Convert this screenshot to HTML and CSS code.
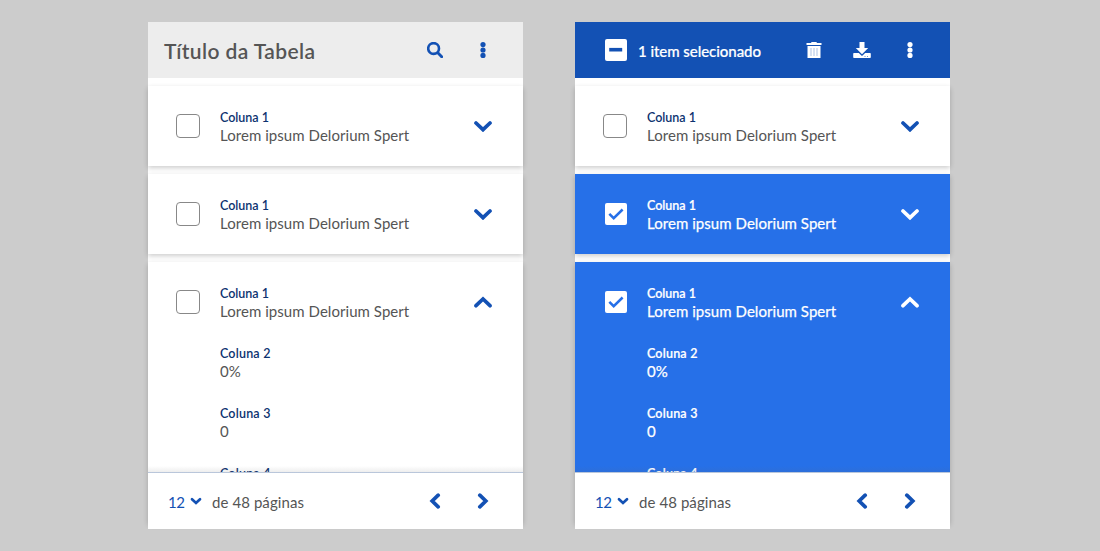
FILE: index.html
```html
<!DOCTYPE html>
<html lang="pt-BR">
<head>
<meta charset="utf-8">
<title>Tabela</title>
<link rel="stylesheet" href="styles.css">
</head>
<body>
<svg class="defs" width="0" height="0">
  <symbol id="down" viewBox="0 0 18 12"><path d="M2 3 9 9.700 16 3" fill="none" stroke="currentColor" stroke-width="3.700" stroke-linecap="round"/></symbol>
  <symbol id="up" viewBox="0 0 18 12"><path d="M2 9.700 9 3 16 9.700" fill="none" stroke="currentColor" stroke-width="3.700" stroke-linecap="round"/></symbol>
  <symbol id="caret" viewBox="0 0 12 8"><path d="M2 2.200 6 5.900 10 2.200" fill="none" stroke="currentColor" stroke-width="2.700" stroke-linecap="round"/></symbol>
  <symbol id="left" viewBox="0 0 16 16"><path d="M11.200 2.200 5.200 8l6 5.800" fill="none" stroke="currentColor" stroke-width="3.700" stroke-linecap="round"/></symbol>
  <symbol id="right" viewBox="0 0 16 16"><path d="M4.800 2.200 10.800 8l-6 5.800" fill="none" stroke="currentColor" stroke-width="3.700" stroke-linecap="round"/></symbol>
  <symbol id="more" viewBox="0 0 16 16"><g fill="currentColor"><circle cx="8" cy="2.600" r="2.600"/><circle cx="8" cy="8" r="2.600"/><circle cx="8" cy="13.400" r="2.600"/></g></symbol>
  <symbol id="search" viewBox="0 0 16 16"><path d="m10.800 10.800 3.900 3.900" stroke="currentColor" stroke-width="2.900" stroke-linecap="round"/><circle cx="6.600" cy="6.500" r="5.400" fill="none" stroke="currentColor" stroke-width="2.600"/></symbol>
  <symbol id="trash" viewBox="0 0 16 16"><path d="M.5 1H5l.6-1h4.800l.6 1h4.500v2H.5zM1.500 4h13v12h-13z" fill="currentColor"/><path d="M5 6v8M8 6v8M11 6v8" stroke="#1351b4" stroke-opacity=".35"/></symbol>
  <symbol id="download" viewBox="0 0 18 16"><path d="M6.500 0h5v6h3.700L9 12.200 2.800 6h3.700z" fill="currentColor"/><path d="M1 11h4.800L9 14l3.200-3H17q.8 0 .8.800v3.400q0 .8-.8.800H1q-.8 0-.8-.8v-3.400Q.2 11 1 11z" fill="currentColor"/><path d="M11.500 14.500h1M14 14.500h1" stroke="#1351b4" stroke-opacity=".6"/></symbol>
  <symbol id="check" viewBox="0 0 24 24"><rect x="1" y="1" width="22" height="22" rx="2" fill="#fff"/><path d="m5.300 11.800 4.400 4.400 8.900-8.700" fill="none" stroke="#2670e8" stroke-width="2.500"/></symbol>
  <symbol id="minus" viewBox="0 0 24 24"><rect x="1" y="1" width="22" height="22" rx="2" fill="#fff"/><path d="M5.200 11.700h13" stroke="#1351b4" stroke-width="3.600"/></symbol>
</svg>
<main class="stage">
  <section class="panel">
    <header class="bar">
      <h1 class="title">Título da Tabela</h1>
      <div class="actions"><svg class="icon"><use href="#search"/></svg><svg class="icon"><use href="#more"/></svg></div>
    </header>
    <article class="card">
      <span class="box"></span>
      <div class="cells"><div class="cell"><span class="label">Coluna 1</span><span class="value">Lorem ipsum Delorium Spert</span></div></div>
      <svg class="chevron"><use href="#down"/></svg>
    </article>
    <article class="card">
      <span class="box"></span>
      <div class="cells"><div class="cell"><span class="label">Coluna 1</span><span class="value">Lorem ipsum Delorium Spert</span></div></div>
      <svg class="chevron"><use href="#down"/></svg>
    </article>
    <article class="card open">
      <span class="box"></span>
      <div class="cells">
        <div class="cell"><span class="label">Coluna 1</span><span class="value">Lorem ipsum Delorium Spert</span></div>
        <div class="cell"><span class="label later">Coluna 2</span><span class="value">0%</span></div>
        <div class="cell"><span class="label later">Coluna 3</span><span class="value">0</span></div>
        <div class="cell"><span class="label later">Coluna 4</span></div>
      </div>
      <svg class="chevron"><use href="#up"/></svg>
    </article>
    <footer class="footer">
      <span class="page">12</span><svg class="caret"><use href="#caret"/></svg><span class="total">de 48 páginas</span>
      <div class="actions"><svg class="icon"><use href="#left"/></svg><svg class="icon"><use href="#right"/></svg></div>
    </footer>
  </section>
  <section class="panel">
    <header class="bar selected">
      <svg class="tick"><use href="#minus"/></svg>
      <span class="count">1 item selecionado</span>
      <div class="actions"><svg class="icon"><use href="#trash"/></svg><svg class="icon wide"><use href="#download"/></svg><svg class="icon"><use href="#more"/></svg></div>
    </header>
    <article class="card">
      <span class="box"></span>
      <div class="cells"><div class="cell"><span class="label">Coluna 1</span><span class="value">Lorem ipsum Delorium Spert</span></div></div>
      <svg class="chevron"><use href="#down"/></svg>
    </article>
    <article class="card active">
      <svg class="tick"><use href="#check"/></svg>
      <div class="cells"><div class="cell"><span class="label">Coluna 1</span><span class="value">Lorem ipsum Delorium Spert</span></div></div>
      <svg class="chevron"><use href="#down"/></svg>
    </article>
    <article class="card open active">
      <svg class="tick"><use href="#check"/></svg>
      <div class="cells">
        <div class="cell"><span class="label">Coluna 1</span><span class="value">Lorem ipsum Delorium Spert</span></div>
        <div class="cell"><span class="label later">Coluna 2</span><span class="value">0%</span></div>
        <div class="cell"><span class="label later">Coluna 3</span><span class="value">0</span></div>
        <div class="cell"><span class="label later">Coluna 4</span></div>
      </div>
      <svg class="chevron"><use href="#up"/></svg>
    </article>
    <footer class="footer">
      <span class="page">12</span><svg class="caret"><use href="#caret"/></svg><span class="total">de 48 páginas</span>
      <div class="actions"><svg class="icon"><use href="#left"/></svg><svg class="icon"><use href="#right"/></svg></div>
    </footer>
  </section>
</main>
</body>
</html>
```
FILE: styles.css
```css
* { box-sizing: border-box; }
body { margin: 0; background: #ccc; font-family: Lato, "Open Sans", sans-serif; color: #555; }
.defs { display: block; }
.stage { display: flex; gap: 52px; padding: 22px 0 0 148px; height: 551px; overflow: hidden; }
.panel { display: flex; flex-direction: column; gap: 8px; width: 375px; height: 507px; background: #fff; }
.bar { display: flex; align-items: center; height: 56px; flex: none; padding: 0 32px 0 16px; background: #ededed; }
.bar.selected { padding-left: 29px; background: #1351b4; color: #fff; }
.title { margin: 2px 0 0; font-size: 21px; line-height: 28px; font-weight: 600; letter-spacing: .4px; white-space: nowrap; }
.count { margin: 2px 0 0 10px; font-size: 15px; font-weight: 500; letter-spacing: -.05px; white-space: nowrap; -webkit-text-stroke: .2px; }
.actions { display: flex; gap: 32px; margin-left: auto; color: #1351b4; }
.selected .actions { color: #fff; }
.icon { width: 16px; height: 16px; flex: none; }
.icon.wide { width: 18px; margin: 0 -1px; }
.card { display: flex; align-items: flex-start; flex: none; height: 80px; padding: 22px 31px 0 28px; background: #fff; box-shadow: 0 2px 5px rgba(0, 0, 0, .2); overflow: hidden; }
.card.open { height: 261px; }
.card.active { background: #2670e8; color: #fff; }
.box { width: 24px; height: 24px; margin-top: 6px; border: 1px solid #888; border-radius: 4px; flex: none; }
.tick { width: 24px; height: 24px; flex: none; }
.card .tick { margin: 6px -1px 0 1px; }
.cells { display: flex; flex-direction: column; gap: 24px; margin-left: 20px; }
.cell { display: flex; flex-direction: column; }
.label { height: 18px; font-size: 12.5px; line-height: 20px; font-weight: 600; color: #0c326f; letter-spacing: 0; white-space: nowrap; }
.label.later { letter-spacing: .2px; }
.active .label { color: #fff; -webkit-text-stroke: .2px; }
.value { height: 18px; font-size: 15px; line-height: 18px; letter-spacing: .05px; white-space: nowrap; }
.active .value { -webkit-text-stroke: .25px; }
.chevron { width: 18px; height: 12px; margin: 12px 0 0 auto; color: #1351b4; flex: none; }
.active .chevron { color: #fff; }
.footer { display: flex; align-items: center; flex: none; position: relative; height: 57px; margin-top: -59px; padding: 1px 32px 0 20px; border-top: 1px solid #c5d4eb; background: #fff; font-size: 15px; }
.footer::before { content: ""; position: absolute; left: 0; right: 0; bottom: 100%; height: 7px; background: linear-gradient(rgba(100, 100, 100, 0), rgba(100, 100, 100, .13)); }
.footer .actions { margin-bottom: 2px; }
.page { width: 17px; margin-top: 1px; letter-spacing: -.5px; color: #1351b4; }
.caret { width: 12px; height: 8px; margin: 0 10px 2px 5px; color: #1351b4; }
.total { margin-top: 1px; letter-spacing: .08px; white-space: nowrap; }
```
